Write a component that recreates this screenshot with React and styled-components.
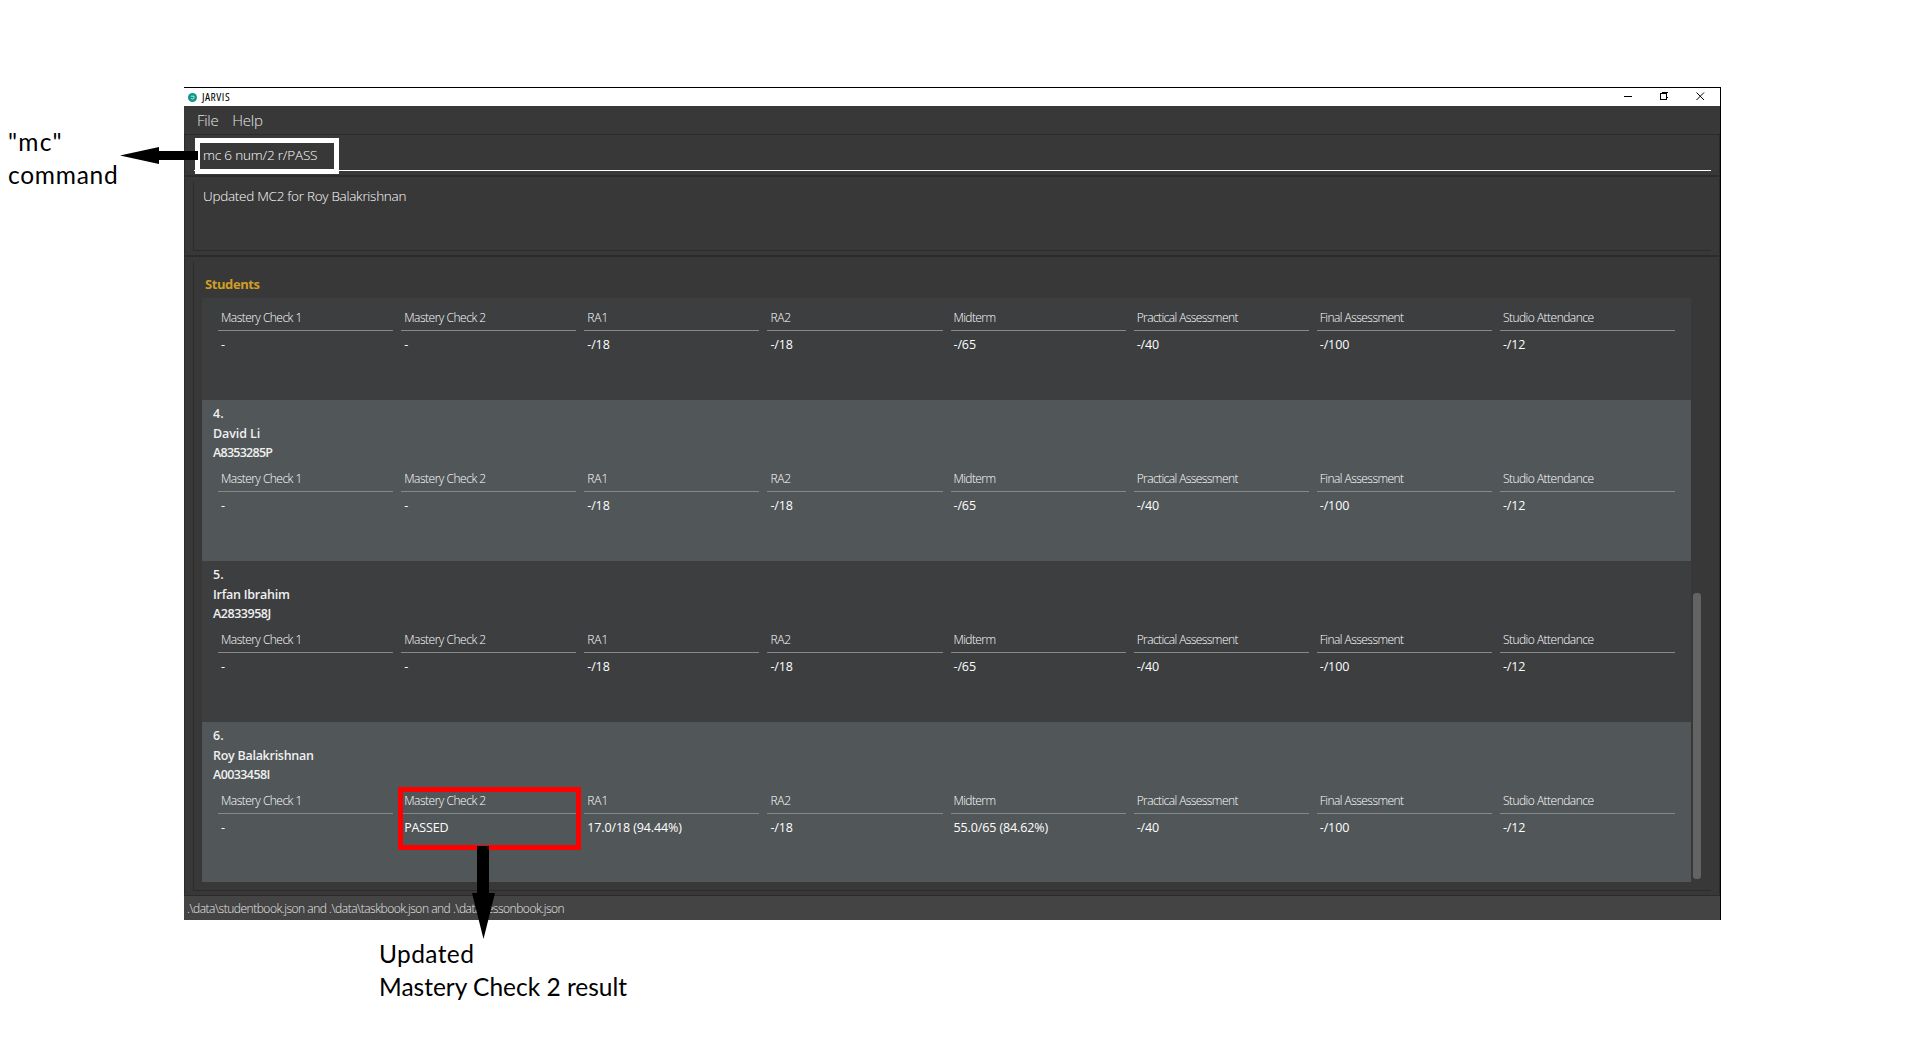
import React from "react";
import styled, { createGlobalStyle } from "styled-components";

const GlobalStyle = createGlobalStyle`
  * { box-sizing: border-box; }
  html, body { margin: 0; padding: 0; background: #fff; }
  body { font-family: "Open Sans", "Noto Sans", sans-serif; }
`;

const Page = styled.div`
  position: relative;
  width: 1921px;
  height: 1041px;
  padding: 87px 0 0 184px;
  background: #fff;
  overflow: hidden;
`;

const Window = styled.div`
  display: flex;
  flex-direction: column;
  width: 1537px;
  height: 833px;
  border-top: 1px solid #000;
  border-right: 1px solid #000;
  background: #383838;
`;

const TitleBar = styled.header`
  display: flex;
  align-items: center;
  justify-content: space-between;
  height: 18px;
  padding: 0 15px 0 4px;
  background: #fff;
`;

const TitleGroup = styled.div`
  display: flex;
  align-items: center;
  gap: 5px;
`;

const Title = styled.span`
  font-size: 11.5px;
  line-height: 18px;
  font-stretch: 75%;
  letter-spacing: 0.5px;
  color: #000;
`;

const WindowButtons = styled.div`
  display: flex;
  align-items: flex-start;
  gap: 28px;
  height: 18px;
  padding-top: 4px;
`;

const MenuBar = styled.nav`
  display: flex;
  align-items: center;
  gap: 14px;
  height: 28px;
  padding: 0 13px;
`;

const MenuItem = styled.span`
  font-size: 15px;
  font-weight: 300;
  line-height: 28px;
  letter-spacing: -0.3px;
  color: #e4e4e4;
`;

const Body = styled.main`
  display: flex;
  flex: 1;
  flex-direction: column;
  border: solid #2b2b2b;
  border-width: 1px 1px 0 1px;
`;

const CommandPane = styled.section`
  height: 40px;
  padding: 0 8px 4px 9px;
`;

const CommandInput = styled.div`
  height: 36px;
  padding: 9px 0 0 9px;
  border-bottom: 1px solid #fff;
  font-size: 13.5px;
  font-weight: 300;
  line-height: 22px;
  letter-spacing: -0.18px;
  color: #fff;
`;

const Divider = styled.div`
  height: 2px;
  background: #2b2b2b;
`;

const ResultPane = styled.section`
  height: 78px;
  padding: 4px 8px 4px 8px;
`;

const ResultDisplay = styled.div`
  height: 70px;
  padding: 4px 0 0 9px;
  border-left: 1px solid #2b2b2b;
  border-bottom: 1px solid #2b2b2b;
  font-size: 13.5px;
  font-weight: 300;
  line-height: 22px;
  letter-spacing: -0.28px;
  color: #fff;
`;

const ListPane = styled.section`
  flex: 1;
  padding: 4px 8px 4px 8px;
`;

const ListFrame = styled.div`
  height: 630px;
  padding: 12px 9px 0 8px;
  border-left: 1px solid #2b2b2b;
  border-bottom: 1px solid #2b2b2b;
`;

const ListTitle = styled.h2`
  height: 25px;
  margin: 0;
  padding-left: 3px;
  font-size: 13px;
  font-weight: 700;
  line-height: 22px;
  letter-spacing: -0.42px;
  color: #cf9e24;
`;

const ListBody = styled.div`
  display: flex;
  gap: 2px;
  height: 584px;
`;

const Rows = styled.div`
  width: 1489px;
`;

const Row = styled.article`
  height: ${(p) => p.$height}px;
  padding: 3px 16px 0;
  background: ${(p) => (p.$light ? "#515658" : "#3c3e3f")};
`;

const Identity = styled.div`
  display: flex;
  flex-direction: column;
  height: 59px;
  margin-left: -5px;
  padding-top: 1px;
`;

const IdentityLine = styled.span`
  height: ${(p) => p.$h || 20}px;
  font-size: 12.5px;
  font-weight: 600;
  line-height: 20px;
  letter-spacing: ${(p) => p.$ls || 0}px;
  color: #f0f0f0;
`;

const Marks = styled.div`
  display: grid;
  grid-template-columns: repeat(8, 1fr);
  column-gap: 8px;
`;

const MarkLabel = styled.div`
  height: 30px;
  padding: 7px 0 0 3px;
  border-bottom: 1px solid #868889;
  font-size: 12px;
  font-weight: 300;
  line-height: 20px;
  letter-spacing: ${(p) => p.$ls}px;
  color: #fff;
`;

const MarkValue = styled.div`
  padding: 4px 0 0 3px;
  font-size: 12.5px;
  line-height: 20px;
  letter-spacing: -0.12px;
  color: #fff;
`;

const ScrollTrack = styled.div`
  display: flex;
  align-items: flex-end;
  width: 8px;
  height: 581px;
`;

const ScrollThumb = styled.div`
  width: 8px;
  height: 286px;
  border-radius: 3px;
  background: #636363;
`;

const StatusBar = styled.footer`
  height: 25px;
  padding: 1px 4px 0 3px;
  border-top: 1px solid #2b2b2b;
  background: #444;
  font-size: 12px;
  font-weight: 300;
  line-height: 24px;
  letter-spacing: -0.48px;
  color: #e6e6e6;
`;

const Highlight = styled.div`
  position: absolute;
  left: ${(p) => p.$x}px;
  top: ${(p) => p.$y}px;
  width: ${(p) => p.$w}px;
  height: ${(p) => p.$h}px;
  border: 5px solid ${(p) => p.$color};
`;

const Arrow = styled.svg`
  position: absolute;
  left: ${(p) => p.$x}px;
  top: ${(p) => p.$y}px;
`;

const Note = styled.div`
  position: absolute;
  left: ${(p) => p.$x}px;
  top: ${(p) => p.$y}px;
  font-family: Lato, sans-serif;
  font-size: 24.5px;
  line-height: 33px;
  color: #000;
`;

const NoteLine = styled.div`
  letter-spacing: ${(p) => p.$ls}px;
  white-space: nowrap;
`;

const MARKS = [
  { label: "Mastery Check 1", value: "-", ls: -0.54 },
  { label: "Mastery Check 2", value: "-", ls: -0.48 },
  { label: "RA1", value: "-/18", ls: -0.1 },
  { label: "RA2", value: "-/18", ls: -0.2 },
  { label: "Midterm", value: "-/65", ls: -0.6 },
  { label: "Practical Assessment", value: "-/40", ls: -0.58 },
  { label: "Final Assessment", value: "-/100", ls: -0.54 },
  { label: "Studio Attendance", value: "-/12", ls: -0.52 },
];

const STUDENTS = [
  { height: 102, results: {} },
  { index: "4.", name: "David Li", nameLs: -0.1, id: "A8353285P", idLs: -0.75, height: 161, light: true, results: {} },
  { index: "5.", name: "Irfan Ibrahim", nameLs: -0.24, id: "A2833958J", idLs: -0.47, height: 161, results: {} },
  {
    index: "6.",
    name: "Roy Balakrishnan",
    nameLs: -0.27,
    id: "A0033458I",
    idLs: -0.6,
    height: 160,
    light: true,
    results: { "Mastery Check 2": "PASSED", RA1: "17.0/18 (94.44%)", Midterm: "55.0/65 (84.62%)" },
  },
];

function StudentRow({ student }) {
  return (
    <Row $height={student.height} $light={student.light}>
      {student.name && (
        <Identity>
          <IdentityLine>{student.index}</IdentityLine>
          <IdentityLine $h={19} $ls={student.nameLs}>{student.name}</IdentityLine>
          <IdentityLine $h={19} $ls={student.idLs}>{student.id}</IdentityLine>
        </Identity>
      )}
      <Marks>
        {MARKS.map(({ label, value, ls }) => (
          <div key={label}>
            <MarkLabel $ls={ls}>{label}</MarkLabel>
            <MarkValue>{student.results[label] || value}</MarkValue>
          </div>
        ))}
      </Marks>
    </Row>
  );
}

export default function App() {
  return (
    <>
      <GlobalStyle />
      <Page>
        <Window>
          <TitleBar>
            <TitleGroup>
              <svg width="9" height="9" viewBox="0 0 9 9">
                <circle cx="4.5" cy="4.5" r="4.5" fill="#0f9688" />
                <path d="M2.8 3.2H6V4.8Q6 6 4.6 6T3 5.2" fill="none" stroke="#cdeeea" strokeWidth="0.9" />
              </svg>
              <Title>JARVIS</Title>
            </TitleGroup>
            <WindowButtons>
              <svg width="8" height="9" viewBox="0 0 8 9" shapeRendering="crispEdges">
                <rect x="0" y="4" width="8" height="1" />
              </svg>
              <svg width="8" height="9" viewBox="0 0 8 9" fill="none" stroke="#000" shapeRendering="crispEdges">
                <path d="M0.5 1.5H6.5V7.5H0.5ZM2 0.5H8M7.5 0V1M7.5 5V6" />
              </svg>
              <svg width="9" height="9" viewBox="0 0 9 9" stroke="#000">
                <path d="M0.5 0.5L8 8M8 0.5L0.5 8" />
              </svg>
            </WindowButtons>
          </TitleBar>
          <MenuBar>
            <MenuItem>File</MenuItem>
            <MenuItem>Help</MenuItem>
          </MenuBar>
          <Body>
            <CommandPane>
              <CommandInput>mc 6 num/2 r/PASS</CommandInput>
            </CommandPane>
            <Divider />
            <ResultPane>
              <ResultDisplay>Updated MC2 for Roy Balakrishnan</ResultDisplay>
            </ResultPane>
            <Divider />
            <ListPane>
              <ListFrame>
                <ListTitle>Students</ListTitle>
                <ListBody>
                  <Rows>
                    {STUDENTS.map((s, i) => (
                      <StudentRow key={i} student={s} />
                    ))}
                  </Rows>
                  <ScrollTrack>
                    <ScrollThumb />
                  </ScrollTrack>
                </ListBody>
              </ListFrame>
            </ListPane>
          </Body>
          <StatusBar>
            {".\\data\\studentbook.json and .\\data\\taskbook.json and .\\data\\lessonbook.json"}
          </StatusBar>
        </Window>

        <Highlight $x={195} $y={138} $w={144} $h={36} $color="#fff" />
        <Arrow $x={120} $y={147} width="78" height="17" viewBox="0 0 78 17">
          <path d="M0 8.5L39 0V4H78V13H39V17Z" />
        </Arrow>
        <Note $x={8} $y={125}>
          <NoteLine $ls={1.2}>"mc"</NoteLine>
          <NoteLine $ls={0.75}>command</NoteLine>
        </Note>

        <Highlight $x={398} $y={787} $w={183} $h={63} $color="#ff0000" />
        <Arrow $x={472} $y={846} width="23" height="93" viewBox="0 0 23 93">
          <path d="M5 0H17V47H23L11.5 93L0 47H5Z" />
        </Arrow>
        <Note $x={379} $y={937}>
          <NoteLine $ls={0.4}>Updated</NoteLine>
          <NoteLine $ls={0}>Mastery Check 2 result</NoteLine>
        </Note>
      </Page>
    </>
  );
}
